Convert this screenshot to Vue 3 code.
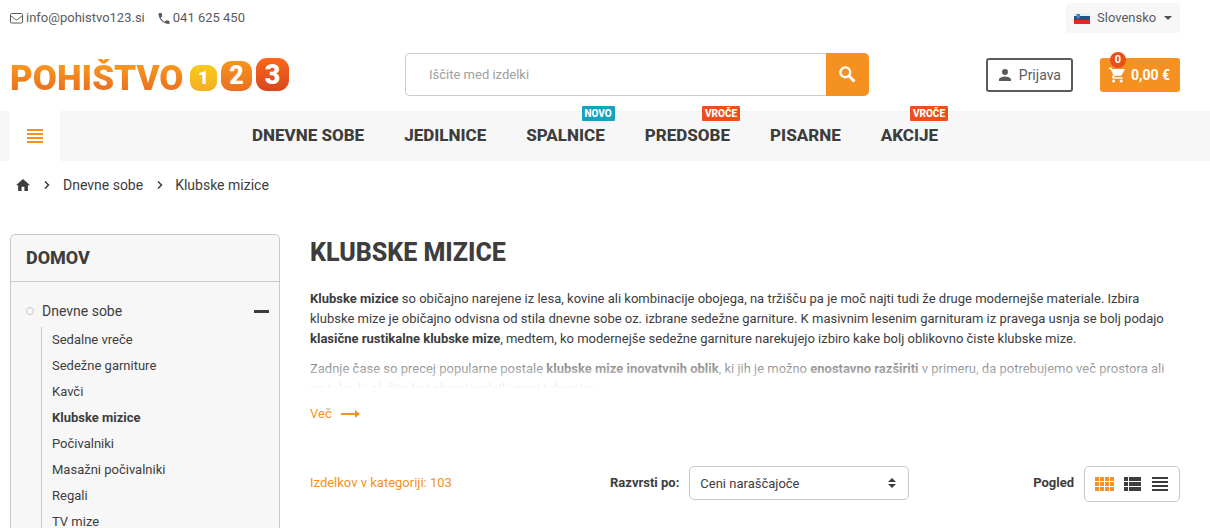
<script setup>
import { ref } from 'vue'

const language = ref('Slovensko')
const sort = ref('Ceni naraščajoče')
const view = ref('grid')

const menu = [
  { label: 'Dnevne sobe' },
  { label: 'Jedilnice' },
  { label: 'Spalnice', badge: 'Novo', tone: 'new' },
  { label: 'Predsobe', badge: 'Vroče', tone: 'hot' },
  { label: 'Pisarne' },
  { label: 'Akcije', badge: 'Vroče', tone: 'hot' },
]

const categories = [
  'Sedalne vreče',
  'Sedežne garniture',
  'Kavči',
  'Klubske mizice',
  'Počivalniki',
  'Masažni počivalniki',
  'Regali',
  'TV mize',
]
const current = 'Klubske mizice'
</script>

<template>
  <div class="page">
    <div class="topbar">
      <div class="contacts">
        <a href="#" class="contact">
          <svg width="13" height="11" viewBox="0 0 13 11" fill="none" stroke="currentColor">
            <rect x="0.5" y="0.5" width="12" height="9.5" rx="1" />
            <path d="M0.5 2.5 L5.3 6.4 Q6.5 7.2 7.7 6.4 L12.5 2.5" />
          </svg>
          info@pohistvo123.si
        </a>
        <a href="#" class="contact">
          <svg width="12" height="11" viewBox="3 3 18 18" fill="currentColor">
            <path d="M6.6 10.8c1.4 2.8 3.8 5.1 6.6 6.6l2.2-2.2c.3-.3.7-.4 1-.2 1.1.4 2.3.6 3.6.6.6 0 1 .4 1 1V20c0 .6-.4 1-1 1C10.6 21 3 13.4 3 4c0-.6.4-1 1-1h3.5c.6 0 1 .4 1 1 0 1.2.2 2.4.6 3.6.1.3 0 .7-.2 1z" />
          </svg>
          041 625 450
        </a>
      </div>
      <label class="language">
        <svg width="16" height="11" viewBox="0 0 16 11">
          <rect width="16" height="4" fill="#e9eef2" />
          <rect y="3" width="16" height="5" fill="#23508e" />
          <rect y="7" width="16" height="4" fill="#e8242b" />
          <path d="M2.5 1h3.500v3q0 1.500-1.750 2Q2.500 5.500 2.500 4z" fill="#4a83b5" />
        </svg>
        <select v-model="language" aria-label="Jezik">
          <option>Slovensko</option>
        </select>
        <svg width="8" height="4" viewBox="0 0 8 4"><path d="M0 0h8L4 4z" fill="#505050" /></svg>
      </label>
    </div>

    <header class="header">
      <a href="#" class="logo" aria-label="Pohištvo 123">
        <span class="word">POHIŠTVO</span>
        <span class="tile one">1</span>
        <span class="tile two">2</span>
        <span class="tile three">3</span>
      </a>
      <form class="search" @submit.prevent>
        <input type="text" placeholder="Iščite med izdelki" aria-label="Iščite med izdelki" />
        <button type="submit" aria-label="Išči">
          <svg width="17" height="17" viewBox="0 0 17 17" fill="none" stroke="#fff">
            <circle cx="6.3" cy="6.3" r="4.9" stroke-width="2.4" />
            <path d="M10 10l5.500 5.500" stroke-width="3" />
          </svg>
        </button>
      </form>
      <div class="actions">
        <a href="#" class="login">
          <svg width="12" height="12" viewBox="4 4 16 16" fill="currentColor">
            <path d="M12 12a4 4 0 1 0 0-8 4 4 0 0 0 0 8zm0 2c-2.700 0-8 1.300-8 4v2h16v-2c0-2.700-5.300-4-8-4z" />
          </svg>
          Prijava
        </a>
        <a href="#" class="cart">
          <span class="count">0</span>
          <svg width="16" height="16" viewBox="1 2 21 20" fill="currentColor">
            <path d="M7 18a2 2 0 1 0 0 4 2 2 0 0 0 0-4zM1 2v2h2l3.600 7.600-1.350 2.450C4.500 15.400 5.500 17 7 17h12v-2H7.400l1.150-2h7.450c.75 0 1.400-.4 1.750-1l3.600-6.500A1 1 0 0 0 20.500 4H5.200l-.94-2zM17 18a2 2 0 1 0 0 4 2 2 0 0 0 0-4z" />
          </svg>
          0,00 €
        </a>
      </div>
    </header>

    <nav class="nav">
      <button type="button" class="burger" aria-label="Meni">
        <svg width="16" height="14" viewBox="0 0 16 14" fill="currentColor">
          <path d="M0 0h16v2H0zM0 4h16v2H0zM0 8h16v2H0zM0 12h16v2H0z" />
        </svg>
      </button>
      <ul class="menu">
        <li v-for="item in menu" :key="item.label">
          <a href="#">{{ item.label }}</a>
          <span v-if="item.badge" class="badge" :class="item.tone">{{ item.badge }}</span>
        </li>
      </ul>
    </nav>

    <nav class="crumbs" aria-label="Pot">
      <a href="#" aria-label="Domov">
        <svg width="14" height="12" viewBox="2 3 20 17" fill="currentColor">
          <path d="M10 20v-6h4v6h5v-8h3L12 3 2 12h3v8z" />
        </svg>
      </a>
      <svg class="sep" width="6" height="8" viewBox="0 0 6 8" fill="none" stroke="currentColor" stroke-width="1.5"><path d="M1 0.500L4.500 4 1 7.500" /></svg>
      <a href="#">Dnevne sobe</a>
      <svg class="sep" width="6" height="8" viewBox="0 0 6 8" fill="none" stroke="currentColor" stroke-width="1.5"><path d="M1 0.500L4.500 4 1 7.500" /></svg>
      <span>Klubske mizice</span>
    </nav>

    <div class="columns">
      <aside class="sidebar">
        <h2>Domov</h2>
        <div class="tree">
          <div class="parent">
            <i class="dot"></i>
            <a href="#">Dnevne sobe</a>
            <button type="button" aria-label="Skrij podkategorije"></button>
          </div>
          <ul>
            <li v-for="name in categories" :key="name">
              <a href="#" :class="{ current: name === current }">{{ name }}</a>
            </li>
          </ul>
        </div>
      </aside>

      <main>
        <h1>Klubske mizice</h1>
        <div class="intro">
          <p>
            <strong>Klubske mizice</strong> so običajno narejene iz lesa, kovine ali kombinacije obojega, na tržišču pa
            je moč najti tudi že druge modernejše materiale. Izbira klubske mize je običajno odvisna od stila dnevne
            sobe oz. izbrane sedežne garniture. K masivnim lesenim garnituram iz pravega usnja se bolj podajo
            <strong>klasične rustikalne klubske mize</strong>, medtem, ko modernejše sedežne garniture narekujejo izbiro
            kake bolj oblikovno čiste klubske mize.
          </p>
          <p>
            Zadnje čase so precej popularne postale <strong>klubske mize inovatvnih oblik</strong>, ki jih je možno
            <strong>enostavno razširiti</strong> v primeru, da potrebujemo več prostora ali pa take, ki služijo kot
            shranjevalniki mini taburejev.
          </p>
        </div>
        <a href="#" class="more">
          Več
          <svg width="19" height="8" viewBox="0 0 19 8" fill="currentColor"><path d="M0 3h14V0l5 4-5 4V5H0z" /></svg>
        </a>

        <div class="toolbar">
          <span class="total">Izdelkov v kategoriji: 103</span>
          <div class="sorting">
            <label for="sort">Razvrsti po:</label>
            <div class="select">
              <select id="sort" v-model="sort">
                <option>Ceni naraščajoče</option>
              </select>
              <svg width="8" height="10" viewBox="0 0 8 10" fill="#3a3d42"><path d="M4 0l4 4H0zM4 10L0 6h8z" /></svg>
            </div>
          </div>
          <div class="viewing">
            <span>Pogled</span>
            <div class="views">
              <button type="button" aria-label="Mreža" :class="{ active: view === 'grid' }" @click="view = 'grid'">
                <svg width="19" height="14" viewBox="0 0 19 14" fill="currentColor">
                  <path d="M0 0h4v4H0zM5 0h4v4H5zM10 0h4v4h-4zM15 0h4v4h-4zM0 5h4v4H0zM5 5h4v4H5zM10 5h4v4h-4zM15 5h4v4h-4zM0 10h4v4H0zM5 10h4v4H5zM10 10h4v4h-4zM15 10h4v4h-4z" />
                </svg>
              </button>
              <button type="button" aria-label="Seznam" :class="{ active: view === 'list' }" @click="view = 'list'">
                <svg width="17" height="14" viewBox="0 0 17 14" fill="currentColor">
                  <path d="M0 0h4v4H0zM5 0h12v4H5zM0 5h4v4H0zM5 5h12v4H5zM0 10h4v4H0zM5 10h12v4H5z" />
                </svg>
              </button>
              <button type="button" aria-label="Vrstice" :class="{ active: view === 'rows' }" @click="view = 'rows'">
                <svg width="16" height="14" viewBox="0 0 16 14" fill="currentColor">
                  <path d="M0 0h16v2H0zM0 4h16v2H0zM0 8h16v2H0zM0 12h16v2H0z" />
                </svg>
              </button>
            </div>
          </div>
        </div>
      </main>
    </div>
  </div>
</template>

<style>
html {
  overflow: hidden;
}
body {
  margin: 0;
  background: #fff;
}
</style>

<style scoped>
.page {
  font-family: Roboto, "Liberation Sans", sans-serif;
  font-size: 13px;
  line-height: 20px;
  color: #3d3d3d;
  height: 100vh;
  overflow: hidden;
}
a {
  color: inherit;
  text-decoration: none;
}
svg {
  flex: none;
}
ul {
  list-style: none;
  margin: 0;
  padding: 0;
}
button,
select,
input {
  font: inherit;
  color: inherit;
  margin: 0;
  padding: 0;
  border: 0;
  background: none;
  appearance: none;
  outline: none;
}
.topbar {
  display: flex;
  justify-content: space-between;
  padding: 3px 30px 0 10px;
  color: #5b5b5b;
}
.contacts,
.contact {
  display: flex;
  align-items: center;
}
.contacts {
  gap: 13px;
}
.contact {
  gap: 3px;
}
.language {
  display: flex;
  align-items: center;
  gap: 7px;
  height: 30px;
  padding: 0 8px;
  border-radius: 3px;
  background: #f7f7f7;
}
.language select {
  width: 60px;
}
.header {
  display: grid;
  grid-template-columns: 395fr 464fr 311fr;
  align-items: center;
  padding: 20px 30px 15px 10px;
}
.logo {
  display: flex;
  align-items: flex-end;
  gap: 4px;
  height: 33px;
  font-weight: 900;
}
.word {
  width: 176px;
  font-size: 35px;
  line-height: 40px;
  margin-bottom: -8px;
  color: transparent;
  background: linear-gradient(#f7941f 20%, #ea6f1e 80%);
  background-clip: text;
}
.tile {
  display: flex;
  align-items: center;
  justify-content: center;
  color: #fff;
}
.one {
  width: 27px;
  height: 26px;
  border-radius: 9px;
  font-size: 19px;
  background: linear-gradient(#f8cb1c, #f4ae20);
}
.two {
  width: 31px;
  height: 30px;
  border-radius: 10px;
  font-size: 25px;
  background: linear-gradient(#f7931e, #e97020);
}
.three {
  width: 33px;
  height: 33px;
  border-radius: 11px;
  font-size: 27px;
  background: linear-gradient(#ff661c, #d5481e);
}
.search {
  display: flex;
  height: 43px;
}
.search input {
  flex: 1;
  min-width: 0;
  padding: 0 23px;
  border: 1px solid #cbcbcb;
  border-right: 0;
  border-radius: 5px 0 0 5px;
}
.search input::placeholder {
  color: #a0a0a0;
  opacity: 1;
}
.search button {
  display: flex;
  align-items: center;
  justify-content: center;
  width: 43px;
  border-radius: 0 5px 5px 0;
  background: #f49120;
}
.actions {
  display: flex;
  justify-content: flex-end;
  gap: 27px;
  font-size: 14px;
}
.login,
.cart {
  display: flex;
  align-items: center;
  box-sizing: border-box;
  height: 34px;
  border-radius: 3px;
}
.login {
  gap: 8px;
  padding: 0 10px 0 11px;
  border: 2px solid #5b5b5b;
  color: #5b5b5b;
}
.cart {
  position: relative;
  gap: 6px;
  padding: 0 10px 0 9px;
  color: #fff;
  font-weight: 700;
  background: #f49120;
}
.count {
  position: absolute;
  top: -6px;
  left: 10px;
  width: 16px;
  border-radius: 8px;
  font-size: 11px;
  line-height: 16px;
  text-align: center;
  background: #e8501d;
}
.nav {
  display: grid;
  grid-template-columns: 50px 1fr 50px;
  height: 50px;
  padding: 0 30px 0 10px;
  background: #f7f7f7;
}
.burger {
  display: flex;
  align-items: center;
  justify-content: center;
  color: #f49120;
  background: #fff;
}
.menu {
  display: flex;
  justify-content: center;
  gap: 40px;
}
.menu li {
  position: relative;
  font-size: 17px;
  font-weight: 800;
  line-height: 48px;
  text-transform: uppercase;
}
.badge {
  position: absolute;
  top: -5px;
  right: -10px;
  padding: 0 3px;
  border-radius: 1px;
  font-size: 10px;
  line-height: 15px;
  color: #fff;
}
.new {
  background: #17a2c0;
}
.hot {
  background: #ea4f1c;
}
.crumbs {
  display: flex;
  align-items: center;
  padding: 14px 16px;
  font-size: 14px;
}
.crumbs a:first-child {
  display: flex;
}
.sep {
  margin: 0 12px 0 14px;
}
.crumbs a:first-child + .sep {
  margin-right: 13px;
}
.columns {
  display: grid;
  grid-template-columns: 270px 1fr;
  gap: 30px;
  padding: 25px 30px 0 10px;
}
.sidebar {
  border: 1px solid #c9c9c9;
  border-radius: 5px;
  background: #f7f7f7;
}
h1,
h2 {
  margin: 0;
  font-weight: 800;
  text-transform: uppercase;
}
h2 {
  padding: 0 15px;
  border-bottom: 1px solid #c9c9c9;
  font-size: 18px;
  line-height: 46px;
}
.tree {
  padding: 19px 10px 20px 15px;
}
.parent {
  display: flex;
  align-items: center;
  gap: 8px;
  font-size: 14px;
}
.dot {
  box-sizing: border-box;
  width: 8px;
  height: 8px;
  border: 1px solid #c9c9c9;
  border-radius: 50%;
}
.parent button {
  width: 15px;
  height: 3px;
  margin-left: auto;
  background: #3d3d3d;
}
.tree ul {
  margin: 6px 0 0 15px;
  padding-left: 10px;
  border-left: 1px solid #c9c9c9;
}
.tree li {
  line-height: 26px;
}
.current {
  font-weight: 700;
}
h1 {
  font-size: 25px;
  line-height: 38px;
}
.intro {
  position: relative;
  height: 100px;
  margin-top: 17px;
  overflow: hidden;
}
.intro::after {
  content: "";
  position: absolute;
  inset: auto 0 0;
  height: 40px;
  background: linear-gradient(rgba(255, 255, 255, 0), #fff);
}
.intro p {
  margin: 0 0 10px;
}
.more {
  display: inline-flex;
  align-items: center;
  gap: 9px;
  margin-top: 15px;
  color: #f49120;
}
.toolbar {
  display: grid;
  grid-template-columns: 300px 1fr auto;
  margin-top: 42px;
  line-height: 34px;
}
.total {
  color: #f49120;
}
.sorting,
.viewing {
  display: flex;
  gap: 10px;
}
.sorting label,
.viewing span {
  font-weight: 700;
}
.select {
  display: grid;
  width: 220px;
  height: 34px;
  align-items: center;
}
.select select,
.select svg {
  grid-area: 1 / 1;
}
.select select {
  box-sizing: border-box;
  height: 34px;
  padding: 0 10px 2px;
  border: 1px solid #c9c9c9;
  border-radius: 5px;
}
.select svg {
  justify-self: end;
  margin-right: 13px;
  pointer-events: none;
}
.views {
  display: flex;
  align-items: center;
  gap: 10px;
  box-sizing: border-box;
  height: 36px;
  padding: 0 11px 0 10px;
  border: 1px solid #c9c9c9;
  border-radius: 5px;
}
.views button {
  display: flex;
}
.views button:last-child {
  margin-left: 1px;
}
.views .active {
  color: #f49120;
}
</style>
